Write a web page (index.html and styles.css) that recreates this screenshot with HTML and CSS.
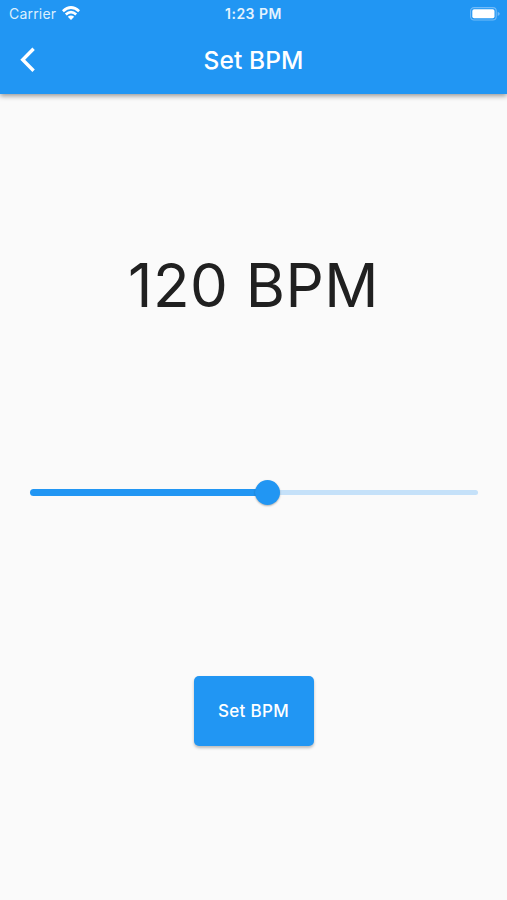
FILE: index.html
```html
<!DOCTYPE html>
<html lang="en">
<head>
<meta charset="utf-8">
<meta name="viewport" content="width=device-width">
<title>Set BPM</title>
<link rel="stylesheet" href="styles.css">
</head>
<body>
<header class="header">
  <div class="status">
    <div class="carrier"><span>Carrier</span>
      <svg class="wifi" width="18" height="14" viewBox="0 0 18 14" fill="none" stroke="#fff" stroke-width="2.7"><path d="M.9 5.2Q9-2.2 17.1 5.2M3.8 8.4Q9 3.8 14.2 8.4"/><path d="M5.8 10.8Q9 8 12.2 10.8L9 14Z" fill="#fff" stroke="none"/></svg>
    </div>
    <time class="time">1:23 PM</time>
    <svg class="battery" width="31" height="14" viewBox="0 0 31 14"><rect x=".6" y=".6" width="25.6" height="12.4" rx="3.4" fill="none" stroke="#72bbf8" stroke-width="1.1"/><rect x="2.3" y="2.3" width="22.2" height="9" rx="1.8" fill="#fff"/><path d="M27.7 4.7Q29.8 5.5 29.8 6.8T27.7 8.9Z" fill="#72bbf8"/></svg>
  </div>
  <div class="toolbar">
    <svg class="back" width="16" height="26" viewBox="0 0 16 26" fill="none" stroke="#fff" stroke-width="3.4"><path d="M13.6 1.8 2.7 12.8 13.6 23.8"/></svg>
    <h1 class="title">Set BPM</h1>
  </div>
</header>
<main class="content">
  <div class="value">120 BPM</div>
  <div class="slider"><span class="active"></span><span class="thumb"></span><span class="inactive"></span></div>
  <button class="button">Set BPM</button>
</main>
</body>
</html>
```
FILE: styles.css
```css
* { box-sizing: border-box; }
body {
  margin: 0;
  height: 900px;
  display: flex;
  flex-direction: column;
  overflow: hidden;
  background: #fafafa;
  color: #202020;
  font-family: Inter, "Liberation Sans", sans-serif;
}
.header {
  height: 94px;
  flex: none;
  background: #2196f3;
  color: #fff;
  box-shadow: 0 2px 5px rgba(0, 0, 0, .4);
}
.status {
  height: 27px;
  display: grid;
  grid-template-columns: 1fr auto 1fr;
  align-items: center;
  padding: 0 6px 0 9px;
}
.carrier {
  display: flex;
  align-items: center;
  gap: 6px;
  font-size: 14px;
  line-height: 20px;
  letter-spacing: .2px;
  color: #dceffd;
}
.wifi { margin-top: -1px; }
.time {
  font-size: 14px;
  line-height: 20px;
  font-weight: 600;
  letter-spacing: .5px;
  margin-right: 3px;
  color: #e4f3fe;
}
.battery { justify-self: end; }
.toolbar {
  height: 65px;
  display: grid;
  grid-template-columns: 1fr auto 1fr;
  align-items: center;
  padding: 0 20px;
}
.title {
  margin: 0;
  font-size: 24.5px;
  line-height: 32px;
  font-weight: 500;
  letter-spacing: .1px;
}
.content {
  flex: 1;
  display: flex;
  flex-direction: column;
  align-items: center;
}
.value {
  margin-top: 151px;
  font-size: 60px;
  line-height: 80px;
  letter-spacing: .5px;
  white-space: nowrap;
}
.slider {
  width: 448px;
  height: 25px;
  margin-top: 155px;
  display: flex;
  align-items: center;
}
.active {
  width: 226px;
  height: 7px;
  border-radius: 4px 0 0 4px;
  background: #2196f3;
}
.thumb {
  width: 25px;
  height: 25px;
  border-radius: 50%;
  background: #2196f3;
  box-shadow: 0 1px 2px rgba(0, 0, 0, .3);
  margin: 0 -1px;
  z-index: 1;
}
.inactive {
  flex: 1;
  height: 5px;
  border-radius: 0 3px 3px 0;
  background: #c5e1f9;
}
.button {
  width: 120px;
  height: 70px;
  margin-top: 171px;
  padding: 0;
  border: 0;
  border-radius: 5px;
  background: #2196f3;
  color: #fff;
  font: 500 17px/24px Inter, "Liberation Sans", sans-serif;
  letter-spacing: .3px;
  box-shadow: 0 2px 3px rgba(0, 0, 0, .25);
}
```
